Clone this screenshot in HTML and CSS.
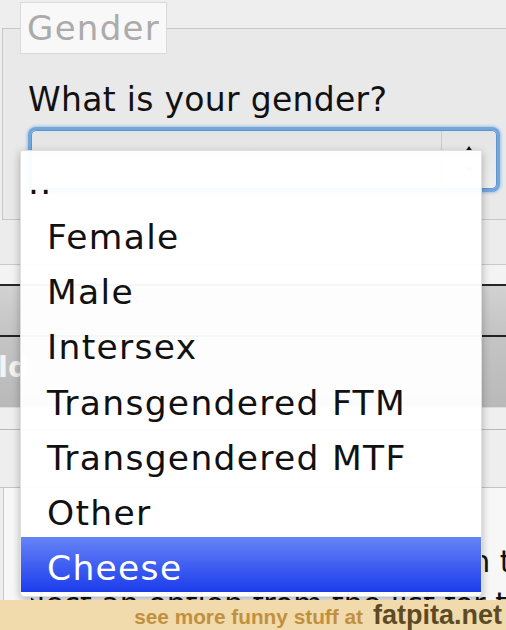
FILE: index.html
```html
<!DOCTYPE html>
<html>
<head>
<meta charset="utf-8">
<link rel="stylesheet" href="styles.css">
</head>
<body>
<div class="page">
  <fieldset class="group">
    <legend class="legend">Gender</legend>
    <div class="question">What is your gender?</div>
    <div class="select">
      <div class="select-value"></div>
      <div class="select-arrows">
        <svg width="10" height="34" viewBox="0 0 10 34"><path d="M5 3 L8.5 8 L1.5 8 Z" fill="#111"/><path d="M1.5 24 L8.5 24 L5 29 Z" fill="#b0b0b0"/></svg>
      </div>
    </div>
  </fieldset>
  <div class="band band-a"></div>
  <div class="band band-b"></div>
  <div class="band band-c"></div>
  <div class="band band-d"><span class="ghost">Bld</span></div>
  <div class="band band-e"></div>
  <div class="band band-f"></div>
  <div class="box">
    <div class="box-line one">in the</div>
    <div class="box-line two">and select an option from the list for th</div>
  </div>
</div>

<div class="popup">
  <div class="opt dots">..</div>
  <div class="opt">Female</div>
  <div class="opt">Male</div>
  <div class="opt">Intersex</div>
  <div class="opt">Transgendered FTM</div>
  <div class="opt">Transgendered MTF</div>
  <div class="opt">Other</div>
  <div class="opt selected">Cheese</div>
</div>

<div class="banner">
  <span class="banner-lead">see more funny stuff at</span>
  <span class="banner-site">fatpita.net</span>
</div>
</body>
</html>
```

FILE: styles.css
```css
html, body {
  margin: 0;
  padding: 0;
}
body {
  width: 506px;
  height: 630px;
  overflow: hidden;
  position: relative;
  background: #eeeeee;
  font-family: "DejaVu Sans", Verdana, sans-serif;
  color: #111;
}
.page {
  display: flex;
  flex-direction: column;
}
.group {
  margin: 2px 0 0 2px;
  padding: 0 0 30px 17px;
  border: 1px solid #c6c6c6;
  border-right: none;
  background: #e9e9e9;
  min-width: 0;
}
.legend {
  padding: 0 6px 0 6px;
  height: 52px;
  box-sizing: border-box;
  line-height: 51px;
  font-size: 34px;
  color: #ababab;
  letter-spacing: 1.3px;
  background: #f8f8f8;
  border: 1px solid #dadada;
}
.question {
  margin: 26px 0 0 8px;
  font-size: 33px;
  line-height: 40px;
  letter-spacing: 0.3px;
  color: #111;
}
.select {
  margin: 10px 9px 0 11px;
  height: 59px;
  box-sizing: border-box;
  border: 1px solid #5d93cf;
  border-radius: 5px;
  background: linear-gradient(#e4e4e4, #eeeeee);
  box-shadow: 0 0 0 3px #72a7de, 0 0 3px 4px rgba(114, 167, 222, 0.6);
  display: flex;
}
.select-value {
  flex: 1;
}
.select-arrows {
  width: 54px;
  border-left: 1px solid #c9c9c9;
  display: flex;
  align-items: center;
  justify-content: center;
}
.band {
  flex: none;
}
.band-a {
  height: 44px;
  background: #ececec;
  border-bottom: 1px solid #c9c9c9;
}
.band-b {
  height: 19px;
  background: #f3f3f3;
  border-bottom: 2px solid #262626;
}
.band-c {
  height: 49px;
  background: linear-gradient(#d2d2d2, #c3c3c3);
  border-bottom: 2px solid #222;
}
.band-d {
  height: 70px;
  background: linear-gradient(#c4c4c4, #b9b9b9);
  border-bottom: 1px solid #dcdcdc;
  overflow: hidden;
}
.ghost {
  display: block;
  margin: 13px 0 0 -24px;
  font-size: 29px;
  font-weight: bold;
  line-height: 34px;
  color: #f3f3f3;
}
.band-e {
  height: 21px;
  background: #efefef;
  border-bottom: 1px solid #b9b9b9;
}
.band-f {
  height: 57px;
  background: #eeeeee;
  border-bottom: 1px solid #c4c4c4;
}
.box {
  margin-left: 3px;
  border-left: 1px solid #c9c9c9;
  background: #f7f7f7;
  height: 200px;
  padding-top: 54px;
  overflow: hidden;
}
.box-line {
  white-space: nowrap;
  font-size: 30px;
  line-height: 39px;
  color: #111;
  display: flex;
  justify-content: flex-end;
  overflow: hidden;
}
.box-line.one {
  margin: 0 -43px 0 300px;
}
.box-line.two {
  margin: 3px -20px 0 27px;
}
.popup {
  position: absolute;
  left: 20px;
  top: 150px;
  width: 462px;
  box-sizing: border-box;
  padding: 0 0 4px;
  background: rgba(255, 255, 255, 0.96);
  border: 1px solid rgba(0, 0, 0, 0.12);
  border-radius: 2px 2px 5px 5px;
  box-shadow: 0 3px 8px rgba(0, 0, 0, 0.28);
}
.opt {
  height: 46.15px;
  padding: 9px 0 0 26px;
  line-height: 45px;
  font-size: 34.5px;
  letter-spacing: 1.3px;
  color: #111;
  white-space: nowrap;
}
.opt.dots {
  padding-left: 7px;
}
.opt.selected {
  color: #fff;
  background: linear-gradient(#6684f7, #1c3cec);
}
.banner {
  position: absolute;
  left: 0;
  right: 0;
  bottom: 0;
  height: 30px;
  background: #f1dbad;
  display: flex;
  justify-content: flex-end;
  align-items: baseline;
  gap: 10px;
  padding-right: 4px;
  font-family: "Liberation Sans", Arial, sans-serif;
  font-weight: bold;
  line-height: 30px;
}
.banner-lead {
  font-size: 20.8px;
  color: #c1903e;
}
.banner-site {
  font-size: 27px;
  color: #5d4a24;
}
```
